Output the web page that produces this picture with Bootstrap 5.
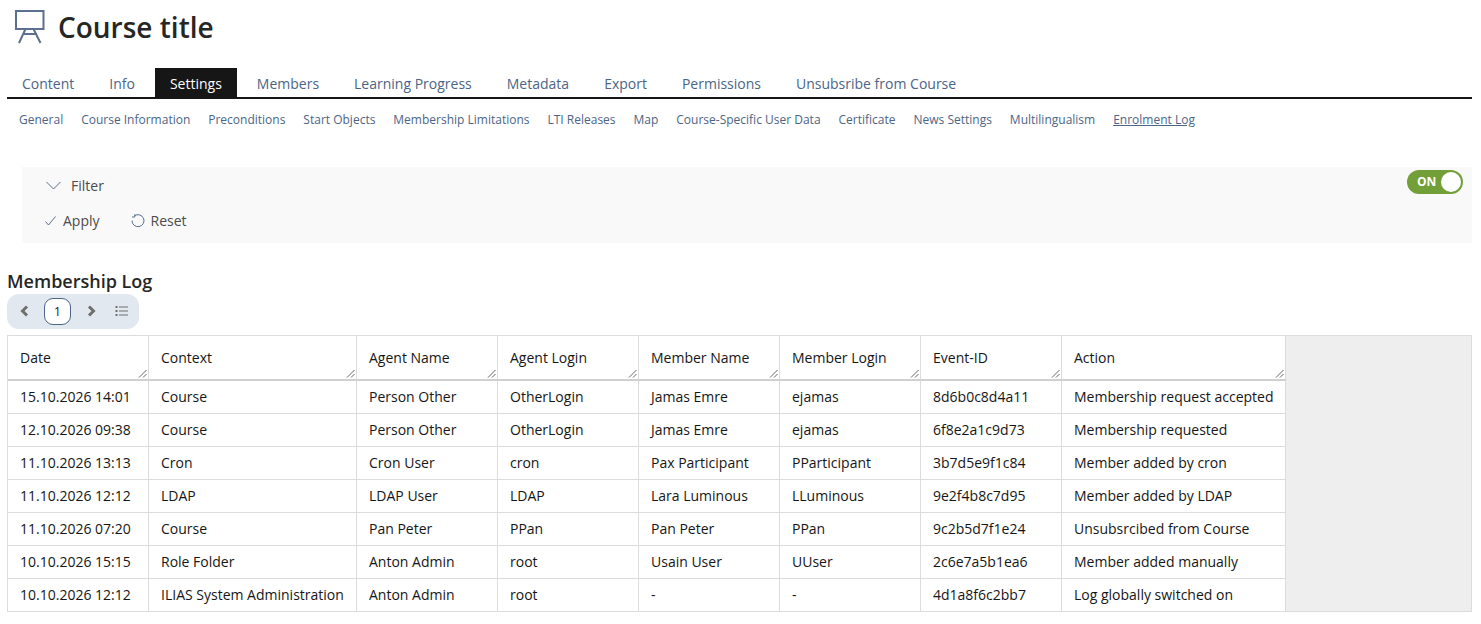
<!DOCTYPE html>
<html lang="en">
<head>
    <meta charset="UTF-8">
    <meta name="viewport" content="width=device-width, initial-scale=1.0">
    <link href="https://cdn.jsdelivr.net/npm/bootstrap@5.3.0/dist/css/bootstrap.min.css" rel="stylesheet">
    <style>
        body { font-family: "Open Sans", "Noto Sans", sans-serif; font-size: 14px; color: #161616; background: #fff; }
        .page-wrap { padding: 0 9px 0 7px; }
        .title-row { height: 68px; padding: 8px 0 0 8px; gap: 13px; }
        .title-row svg { margin-top: 2px; }
        .title-row h1 { font-size: 28px; font-weight: 600; margin: 0; line-height: 38px; color: #262626; }
        .main-tabs { border-bottom: 2px solid #161616; height: 31px; }
        .main-tabs a { display: block; padding: 0 15px; line-height: 31px; height: 29px; margin-right: 5px; color: #4c6586; text-decoration: none; font-size: 14px; }
        .main-tabs a.active { background: #161616; color: #fff; }
        .sub-tabs { gap: 17.96px; padding: 12px 0 0 12px; height: 68px; }
        .sub-tabs a { font-size: 12px; line-height: 18px; color: #4c6586; text-decoration: none; height: 18px; }
        .sub-tabs a.active { text-decoration: underline; }
        .filter-box { margin-left: 15px; background: #f9f9f9; height: 76px; position: relative; }
        .filter-head { height: 37px; padding-left: 24px; gap: 10px; color: #4c4c4c; }
        .filter-btns { padding-left: 23px; gap: 31px; color: #4c4c4c; height: 33px; }
        .filter-btns span { gap: 7px; }
        .filter-btns span.reset-btn { gap: 6px; }
        .onoff { position: absolute; right: 9px; top: 3px; width: 56px; height: 24px; border-radius: 12px; background: #729f38; color: #fff; font-size: 12px; font-weight: 700; padding: 0 2px 0 10px; }
        .onoff i { display: block; width: 20px; height: 20px; border-radius: 50%; background: #fff; }
        .log-title { font-size: 18px; font-weight: 600; line-height: 24px; margin: 26px 0 0; height: 25px; color: #262626; }
        .pager { width: 132px; height: 35px; background: #e2e8ef; border-radius: 12px; padding: 0 0 2px 12px; margin-bottom: 6px; }
        .pager .pg-num { width: 27px; height: 27px; border: 1px solid #4c6586; border-radius: 9px; background: #fff; font-size: 12px; margin: 2px 16px 0 15px; color: #161616; }
        .pager .list-ico { margin-left: 18px; }
        .log-wrap { background: #eee; border: 1px solid #dcdcdc; }
        .log-table { border-collapse: collapse; table-layout: fixed; width: 1277px; margin: 0; background: #fff; }
        .log-table th, .log-table td { font-weight: 400; padding: 0 0 0 12.500px; border-right: 1px solid #dcdcdc; border-bottom: 1px solid #dcdcdc; white-space: nowrap; color: #161616; }
        .log-table th:first-child, .log-table td:first-child { padding-left: 12px; }
        .log-table th { height: 44px; position: relative; border-bottom: 2px solid #d0d0d0; padding-bottom: 1px; }
        .log-table td { height: 33px; }
        .log-table tr:last-child td { border-bottom: 0; }
        .grip { position: absolute; right: 1px; bottom: 1px; display: block; }
    </style>
</head>
<body>
    <div class="page-wrap">
        <div class="title-row d-flex align-items-start">
            <svg width="30" height="34" viewBox="0 0 30 34" fill="none" stroke="#5b6f8f" stroke-width="2">
                <path d="M1 1h27.500v18H1z"/>
                <path d="M10.500 19 4 33M18.500 19 25.500 33M7.500 24h14.500"/>
            </svg>
            <h1>Course title</h1>
        </div>

        <div class="main-tabs d-flex">
            <a href="#">Content</a>
            <a href="#">Info</a>
            <a href="#" class="active">Settings</a>
            <a href="#">Members</a>
            <a href="#">Learning Progress</a>
            <a href="#">Metadata</a>
            <a href="#">Export</a>
            <a href="#">Permissions</a>
            <a href="#">Unsubsribe from Course</a>
        </div>

        <div class="sub-tabs d-flex">
            <a href="#">General</a>
            <a href="#">Course Information</a>
            <a href="#">Preconditions</a>
            <a href="#">Start Objects</a>
            <a href="#">Membership Limitations</a>
            <a href="#">LTI Releases</a>
            <a href="#">Map</a>
            <a href="#">Course-Specific User Data</a>
            <a href="#">Certificate</a>
            <a href="#">News Settings</a>
            <a href="#">Multilingualism</a>
            <a href="#" class="active">Enrolment Log</a>
        </div>

        <div class="filter-box">
            <div class="filter-head d-flex align-items-center">
                <svg width="15" height="9" viewBox="0 0 15 9" fill="none" stroke="#5b6f8f"><path d="M.5 1l7 7 7-7"/></svg>
                <span>Filter</span>
            </div>
            <div class="filter-btns d-flex align-items-center">
                <span class="d-flex align-items-center">
                    <svg width="11" height="10" viewBox="0 0 11 10" fill="none" stroke="#5b6f8f"><path d="M.5 5.500 3.500 9l7-8.500"/></svg>
                    Apply
                </span>
                <span class="reset-btn d-flex align-items-center">
                    <svg width="14" height="14" viewBox="0 0 14 14" fill="none" stroke="#5b6f8f"><path d="M3.500 1.800A6 6 0 1 1 1 6.500M3.800 .2v2.800H1"/></svg>
                    Reset
                </span>
            </div>
            <div class="onoff d-flex align-items-center justify-content-between">ON<i></i></div>
        </div>

        <h2 class="log-title">Membership Log</h2>
        <div class="pager d-flex align-items-center">
            <svg width="10" height="12" viewBox="0 0 10 12" fill="none" stroke="#6f6f6f" stroke-width="3"><path d="M8 1.500 3.500 6 8 10.500"/></svg>
            <span class="pg-num d-flex align-items-center justify-content-center">1</span>
            <svg width="10" height="12" viewBox="0 0 10 12" fill="none" stroke="#6f6f6f" stroke-width="3"><path d="M2 1.500 6.500 6 2 10.500"/></svg>
            <svg class="list-ico" width="13" height="12" viewBox="0 0 13 12" fill="none" stroke="#6f6f6f"><path d="M4 2h9M4 6h9M4 10h9"/><path d="M.5 2h2M.5 6h2M.5 10h2" stroke-width="2"/></svg>
        </div>

        <div class="log-wrap">
            <table class="log-table">
                <colgroup id="logCols"></colgroup>
                <thead><tr id="logHead"></tr></thead>
                <tbody id="logBody"></tbody>
            </table>
        </div>
    </div>

    <script src="https://cdn.jsdelivr.net/npm/bootstrap@5.3.0/dist/js/bootstrap.bundle.min.js"></script>
    <script>
        const widths = [140, 208, 141, 141, 141, 141, 141, 224];
        const heads = ["Date", "Context", "Agent Name", "Agent Login", "Member Name", "Member Login", "Event-ID", "Action"];
        const rows = [
            ["15.10.2026 14:01", "Course", "Person Other", "OtherLogin", "Jamas Emre", "ejamas", "8d6b0c8d4a11", "Membership request accepted"],
            ["12.10.2026 09:38", "Course", "Person Other", "OtherLogin", "Jamas Emre", "ejamas", "6f8e2a1c9d73", "Membership requested"],
            ["11.10.2026 13:13", "Cron", "Cron User", "cron", "Pax Participant", "PParticipant", "3b7d5e9f1c84", "Member added by cron"],
            ["11.10.2026 12:12", "LDAP", "LDAP User", "LDAP", "Lara Luminous", "LLuminous", "9e2f4b8c7d95", "Member added by LDAP"],
            ["11.10.2026 07:20", "Course", "Pan Peter", "PPan", "Pan Peter", "PPan", "9c2b5d7f1e24", "Unsubsrcibed from Course"],
            ["10.10.2026 15:15", "Role Folder", "Anton Admin", "root", "Usain User", "UUser", "2c6e7a5b1ea6", "Member added manually"],
            ["10.10.2026 12:12", "ILIAS System Administration", "Anton Admin", "root", "-", "-", "4d1a8f6c2bb7", "Log globally switched on"]
        ];
        const grip = '<svg class="grip" width="9" height="9" viewBox="0 0 9 9" fill="none" stroke="#666"><path d="M1 8.500 8.500 1M5 8.500 8.500 5"/></svg>';

        document.getElementById('logCols').innerHTML = widths.map(w => `<col style="width:${w}px">`).join('');
        document.getElementById('logHead').innerHTML = heads.map(h => `<th>${h}${grip}</th>`).join('');
        document.getElementById('logBody').innerHTML = rows.map(r =>
            '<tr>' + r.map(c => `<td>${c}</td>`).join('') + '</tr>'
        ).join('');
    </script>
</body>
</html>
